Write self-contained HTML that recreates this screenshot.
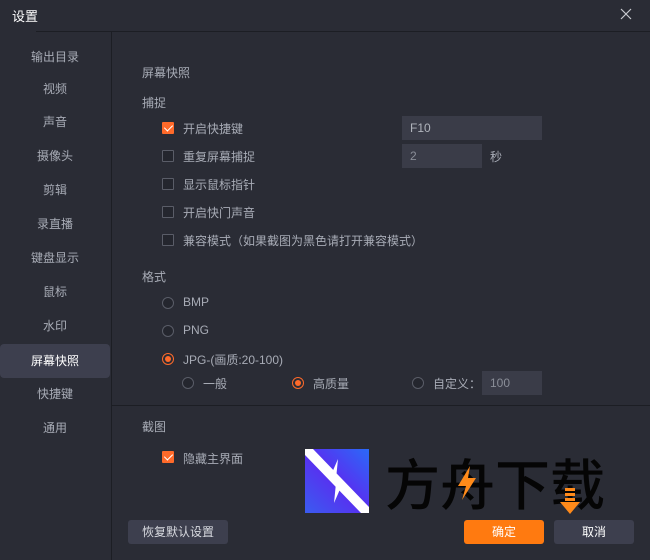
<!DOCTYPE html><html><head><meta charset="utf-8"><style>
*{margin:0;padding:0;box-sizing:border-box}
body{width:650px;height:560px;background:#2a2c35;font-family:"Liberation Sans","Noto Sans CJK SC",sans-serif;font-size:12px;color:#a8acb6;position:relative;overflow:hidden}
.a{position:absolute;white-space:nowrap}
.nav{position:absolute;left:0;width:110px;text-align:center;height:34px;line-height:34px;color:#a8acb6;font-size:12px}
.sel{background:#3d3f4e;color:#fff;border-radius:4px}
.cb{position:absolute;width:12px;height:12px;border:1px solid #5a5d68;background:#24262e;border-radius:1px}
.cb.on{background:#ff6a2a;border-color:#ff6a2a}
.cb.on:after{content:"";position:absolute;left:3px;top:0px;width:4px;height:7px;border:solid #fff;border-width:0 1.5px 1.5px 0;transform:rotate(45deg)}
.rd{position:absolute;width:12px;height:12px;border:1px solid #5a5d68;background:#24262e;border-radius:50%}
.rd.on{border-color:#ff6a2a;background:#2a2c35}
.rd.on:after{content:"";position:absolute;left:2px;top:2px;width:6px;height:6px;border-radius:50%;background:#ff6a2a}
.inp{position:absolute;background:#3a3c48;color:#8a8e98;height:24px;line-height:24px;padding-left:8px}
.btn{position:absolute;height:24px;line-height:24px;text-align:center;color:#fff;border-radius:3px;background:#3d3f4e}
</style></head><body>
<div class="a" style="left:12px;top:6px;color:#fff;font-size:13px">设置</div>
<svg class="a" style="left:620px;top:8px" width="12" height="12" viewBox="0 0 12 12"><path d="M1 1L11 11M11 1L1 11" stroke="#c8cad0" stroke-width="1.2"/></svg>
<div class="a" style="left:36px;top:31px;width:614px;height:1px;background:#1c1e24"></div>
<div class="a" style="left:111px;top:32px;width:1px;height:528px;background:#1c1e24"></div>
<div class="a" style="left:112px;top:405px;width:538px;height:1px;background:#1c1e24"></div>
<div class="nav" style="top:40px">输出目录</div>
<div class="nav" style="top:72px">视频</div>
<div class="nav" style="top:105px">声音</div>
<div class="nav" style="top:139px">摄像头</div>
<div class="nav" style="top:173px">剪辑</div>
<div class="nav" style="top:207px">录直播</div>
<div class="nav" style="top:241px">键盘显示</div>
<div class="nav" style="top:275px">鼠标</div>
<div class="nav" style="top:309px">水印</div>
<div class="nav sel" style="top:344px">屏幕快照</div>
<div class="nav" style="top:377px">快捷键</div>
<div class="nav" style="top:411px">通用</div>
<div class="a" style="left:142px;top:64px">屏幕快照</div>
<div class="a" style="left:142px;top:94px">捕捉</div>
<div class="cb on" style="left:162px;top:122px"></div><div class="a" style="left:183px;top:120px">开启快捷键</div>
<div class="inp" style="left:402px;top:116px;width:140px;color:#b0b4bc">F10</div>
<div class="cb" style="left:162px;top:150px"></div><div class="a" style="left:183px;top:148px">重复屏幕捕捉</div>
<div class="inp" style="left:402px;top:144px;width:80px">2</div><div class="a" style="left:490px;top:148px">秒</div>
<div class="cb" style="left:162px;top:178px"></div><div class="a" style="left:183px;top:176px">显示鼠标指针</div>
<div class="cb" style="left:162px;top:206px"></div><div class="a" style="left:183px;top:204px">开启快门声音</div>
<div class="cb" style="left:162px;top:234px"></div><div class="a" style="left:183px;top:232px">兼容模式（如果截图为黑色请打开兼容模式）</div>
<div class="a" style="left:142px;top:268px">格式</div>
<div class="rd" style="left:162px;top:297px"></div><div class="a" style="left:183px;top:295px">BMP</div>
<div class="rd" style="left:162px;top:325px"></div><div class="a" style="left:183px;top:323px">PNG</div>
<div class="rd on" style="left:162px;top:353px"></div><div class="a" style="left:183px;top:351px">JPG-(画质:20-100)</div>
<div class="rd" style="left:182px;top:377px"></div><div class="a" style="left:203px;top:375px">一般</div>
<div class="rd on" style="left:292px;top:377px"></div><div class="a" style="left:313px;top:375px">高质量</div>
<div class="rd" style="left:412px;top:377px"></div><div class="a" style="left:433px;top:375px">自定义：</div>
<div class="inp" style="left:482px;top:371px;width:60px">100</div>
<div class="a" style="left:142px;top:418px">截图</div>
<div class="cb on" style="left:162px;top:451px"></div><div class="a" style="left:183px;top:450px">隐藏主界面</div>
<svg class="a" style="left:305px;top:449px" width="64" height="64" viewBox="0 0 64 64"><defs><linearGradient id="g" x1="0" y1="1" x2="1" y2="0"><stop offset="0" stop-color="#3a5cf0"/><stop offset="0.5" stop-color="#5a2ef0"/><stop offset="1" stop-color="#2a6af8"/></linearGradient></defs><rect width="64" height="64" fill="url(#g)"/><path d="M0 0H8L64 58V64H56L0 6Z" fill="#fff"/><path d="M33 10L31 30L26 26Z M31 34L36 38L29 54Z" fill="#fff"/></svg>
<div class="a" style="left:385px;top:446px;font-size:55px;color:#050505;letter-spacing:0px;font-family:'Noto Sans CJK SC',sans-serif;font-weight:500;line-height:70px">方舟下载</div>
<svg class="a" style="left:456px;top:466px" width="22" height="34" viewBox="0 0 22 34"><path d="M14 0L2 20H10L6 34L20 12H12Z" fill="#ff8a1a"/></svg>
<svg class="a" style="left:559px;top:488px" width="22" height="26" viewBox="0 0 22 26"><rect x="6" y="0" width="10" height="3" fill="#ff8a1a"/><rect x="6" y="5" width="10" height="3" fill="#ff8a1a"/><rect x="6" y="10" width="10" height="3" fill="#ff8a1a"/><path d="M1 14H21L11 26Z" fill="#ff8a1a"/></svg>
<div class="btn" style="left:128px;top:520px;width:100px;color:#d8dae0">恢复默认设置</div>
<div class="btn" style="left:464px;top:520px;width:80px;background:#ff7a10">确定</div>
<div class="btn" style="left:554px;top:520px;width:80px">取消</div>
</body></html>
